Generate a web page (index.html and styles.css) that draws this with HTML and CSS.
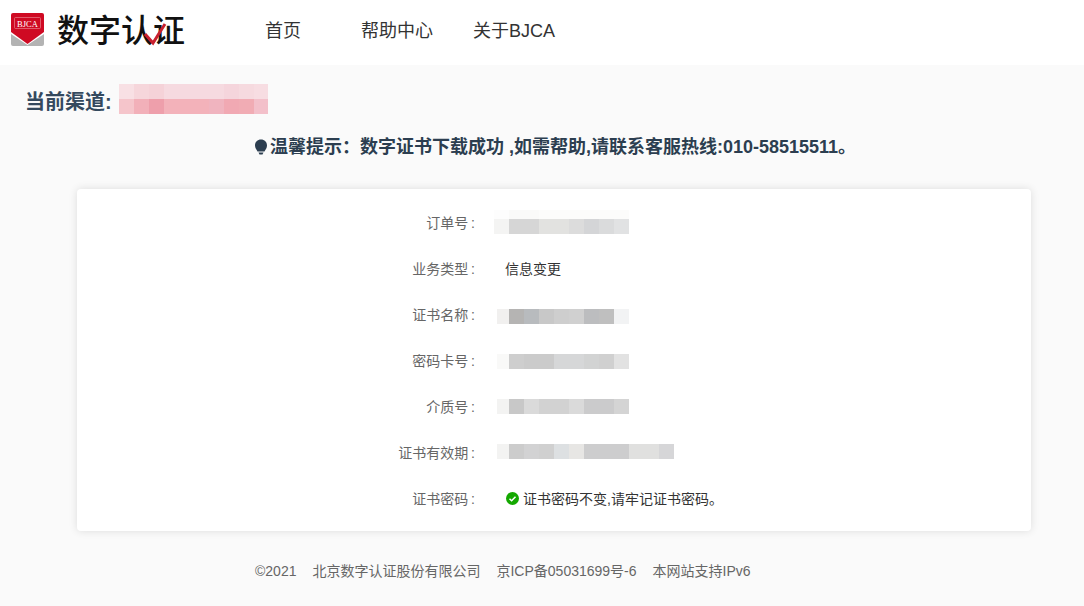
FILE: index.html
```html
<!DOCTYPE html>
<html lang="zh-CN">
<head>
<meta charset="utf-8">
<title>数字认证</title>
<link rel="stylesheet" href="styles.css">
</head>
<body>
<header class="topbar">
  <div class="brand">
    <svg class="shield" width="33" height="33" viewBox="0 0 33 33">
      <path d="M0 21L16.500 32 33 21V31a2 2 0 0 1-2 2H2a2 2 0 0 1-2-2Z" fill="#b3b3b3"/>
      <path d="M2 0H31a2 2 0 0 1 2 2V19L16.500 31 0 19V2a2 2 0 0 1 2-2Z" fill="#cf0a23"/>
      <rect x="3.500" y="4.500" width="26" height="11" rx="1" fill="none" stroke="#e8808c" stroke-width=".7"/>
      <text class="shield-text" x="16.500" y="13.500" text-anchor="middle">BJCA</text>
    </svg>
    <div class="wordmark">数字认证
      <svg class="tick" width="26" height="24" viewBox="0 0 26 24"><path d="M2 12L10 21 22 2" fill="none" stroke="#c8202f" stroke-width="3"/></svg>
    </div>
  </div>
  <nav class="nav">
    <a class="nav-item nav-home">首页</a>
    <a class="nav-item nav-help">帮助中心</a>
    <a class="nav-item">关于BJCA</a>
  </nav>
</header>
<main class="page">
  <div class="channel">
    <h2 class="channel-title">当前渠道:</h2>
    <svg class="mosaic" width="149" height="30" viewBox="0 0 149 30" shape-rendering="crispEdges">
      <rect x="0" y="0" width="15" height="15" fill="#f8e0e4"/><rect x="15" y="0" width="15" height="15" fill="#f6d6db"/><rect x="30" y="0" width="15" height="15" fill="#f5d2d8"/><rect x="45" y="0" width="60" height="15" fill="#f6dae0"/><rect x="105" y="0" width="15" height="15" fill="#f5d5dc"/><rect x="120" y="0" width="15" height="15" fill="#f6dadf"/><rect x="135" y="0" width="14" height="15" fill="#f7dde2"/>
      <rect x="0" y="15" width="15" height="15" fill="#f5c5cb"/><rect x="15" y="15" width="15" height="15" fill="#f2b0b9"/><rect x="30" y="15" width="15" height="15" fill="#ee9fab"/><rect x="45" y="15" width="45" height="15" fill="#f3b2ba"/><rect x="90" y="15" width="15" height="15" fill="#f0b4bf"/><rect x="105" y="15" width="15" height="15" fill="#f1a9b3"/><rect x="120" y="15" width="15" height="15" fill="#f1acb4"/><rect x="135" y="15" width="14" height="15" fill="#f3c0ca"/>
    </svg>
  </div>
  <p class="tip">
    <svg class="bulb" width="16" height="18" viewBox="0 0 16 18"><path d="M7 1.500C10.500 1.500 13 4 13 7.500 13 10 11.500 11.500 10.500 13.500H3.500C2.500 11.500 1 10 1 7.500 1 4 3.500 1.500 7 1.500Z" fill="#2c3e50"/><path d="M4.500 14.500H9.500L8.500 16.500H5.500Z" fill="#2c3e50"/></svg>温馨提示：数字证书下载成功 ,如需帮助,请联系客服热线:010-58515511。
  </p>
  <section class="card">
    <div class="row">
      <span class="label">订单号&#8201;:</span>
      <svg class="mosaic mosaic-order" width="135" height="24" viewBox="0 0 135 24" shape-rendering="crispEdges">
        <rect x="0" y="0" width="15" height="9" fill="#fdfdfd"/><rect x="15" y="0" width="30" height="9" fill="#fafaf9"/><rect x="45" y="0" width="90" height="9" fill="#fcfcfb"/>
        <rect x="0" y="9" width="15" height="15" fill="#f4f4f3"/><rect x="15" y="9" width="30" height="15" fill="#d6d6d6"/><rect x="45" y="9" width="30" height="15" fill="#e2e2e0"/><rect x="75" y="9" width="15" height="15" fill="#dcdcdc"/><rect x="90" y="9" width="15" height="15" fill="#d4d5d7"/><rect x="105" y="9" width="15" height="15" fill="#dadbdc"/><rect x="120" y="9" width="15" height="15" fill="#e1e2e3"/>
      </svg>
    </div>
    <div class="row">
      <span class="label">业务类型&#8201;:</span>
      <span class="value">信息变更</span>
    </div>
    <div class="row">
      <span class="label">证书名称&#8201;:</span>
      <svg class="mosaic mosaic-field mosaic-name" width="132" height="15" viewBox="0 0 132 15" shape-rendering="crispEdges">
        <rect x="0" y="0" width="12" height="15" fill="#f1f0ef"/><rect x="12" y="0" width="15" height="15" fill="#b5b4b3"/><rect x="27" y="0" width="15" height="15" fill="#b8bbbe"/><rect x="42" y="0" width="15" height="15" fill="#c8c8c8"/><rect x="57" y="0" width="15" height="15" fill="#cecece"/><rect x="72" y="0" width="15" height="15" fill="#d0d0d0"/><rect x="87" y="0" width="15" height="15" fill="#bcbdbf"/><rect x="102" y="0" width="15" height="15" fill="#bfbfbf"/><rect x="117" y="0" width="15" height="15" fill="#f2f3f4"/>
      </svg>
    </div>
    <div class="row">
      <span class="label">密码卡号&#8201;:</span>
      <svg class="mosaic mosaic-field mosaic-card" width="132" height="15" viewBox="0 0 132 15" shape-rendering="crispEdges">
        <rect x="0" y="0" width="12" height="15" fill="#f9f9f8"/><rect x="12" y="0" width="15" height="15" fill="#cecece"/><rect x="27" y="0" width="30" height="15" fill="#cbcbcb"/><rect x="57" y="0" width="30" height="15" fill="#d6d7d8"/><rect x="87" y="0" width="15" height="15" fill="#d2d3d3"/><rect x="102" y="0" width="15" height="15" fill="#d0d0d0"/><rect x="117" y="0" width="15" height="15" fill="#e2e2e2"/>
      </svg>
    </div>
    <div class="row">
      <span class="label">介质号&#8201;:</span>
      <svg class="mosaic mosaic-field mosaic-medium" width="132" height="15" viewBox="0 0 132 15" shape-rendering="crispEdges">
        <rect x="0" y="0" width="12" height="15" fill="#f3f3f2"/><rect x="12" y="0" width="15" height="15" fill="#c8c8c8"/><rect x="27" y="0" width="15" height="15" fill="#dadada"/><rect x="42" y="0" width="30" height="15" fill="#d2d2d2"/><rect x="72" y="0" width="15" height="15" fill="#dadada"/><rect x="87" y="0" width="30" height="15" fill="#cbcbcc"/><rect x="117" y="0" width="15" height="15" fill="#d4d4d4"/>
      </svg>
    </div>
    <div class="row">
      <span class="label">证书有效期&#8201;:</span>
      <svg class="mosaic mosaic-field mosaic-valid" width="177" height="15" viewBox="0 0 177 15" shape-rendering="crispEdges">
        <rect x="0" y="0" width="12" height="15" fill="#f3f3f2"/><rect x="12" y="0" width="15" height="15" fill="#cccccc"/><rect x="27" y="0" width="15" height="15" fill="#d2d2d3"/><rect x="42" y="0" width="15" height="15" fill="#d0d0d0"/><rect x="57" y="0" width="15" height="15" fill="#dde0e2"/><rect x="72" y="0" width="15" height="15" fill="#e7e6e4"/><rect x="87" y="0" width="45" height="15" fill="#cdcdce"/><rect x="132" y="0" width="30" height="15" fill="#e0e0df"/><rect x="162" y="0" width="15" height="15" fill="#d6d6d8"/>
      </svg>
    </div>
    <div class="row">
      <span class="label">证书密码&#8201;:</span>
      <span class="value value-status">
        <svg class="ok" width="13" height="13" viewBox="0 0 13 13"><circle cx="6.500" cy="6.500" r="6.500" fill="#14a800"/><path d="M3.500 6.800L5.600 8.800 9.500 4.700" fill="none" stroke="#fff" stroke-width="1.500"/></svg>证书密码不变,请牢记证书密码。
      </span>
    </div>
  </section>
  <footer class="footer">
    <span>©2021</span><span>北京数字认证股份有限公司</span><span>京ICP备05031699号-6</span><span>本网站支持IPv6</span>
  </footer>
</main>
</body>
</html>
```
FILE: styles.css
```css
* { box-sizing: border-box; }
html, body { margin: 0; padding: 0; }
body {
  font-family: "Liberation Sans", "Noto Sans CJK SC", sans-serif;
  background: #fafafa;
  color: #333;
}
.topbar {
  height: 65px;
  background: #fff;
  display: flex;
  align-items: center;
  padding-left: 11px;
}
.brand {
  display: flex;
  align-items: center;
  gap: 13px;
  width: 254px;
}
.shield { display: block; margin-top: -6px; }
.shield-text { font-family: "Liberation Serif", serif; font-size: 8.500px; fill: #fff; }
.wordmark {
  position: relative;
  font-family: "Noto Sans CJK SC", sans-serif;
  font-size: 32px;
  font-weight: 500;
  line-height: 34px;
  color: #111;
  white-space: nowrap;
  margin-top: -9px;
}
.tick { position: absolute; left: 86px; top: 11px; }
.nav { display: flex; font-size: 18px; color: #333; margin-top: -8px; }
.nav-item { display: block; }
.nav-home { width: 96px; }
.nav-help { width: 112px; }
.channel {
  display: flex;
  align-items: flex-start;
  padding: 19px 0 0 25px;
  gap: 7px;
}
.channel-title {
  margin: 3px 0 0;
  font-size: 20px;
  font-weight: 700;
  line-height: 30px;
  color: #34495e;
}
.mosaic { display: block; }
.tip {
  margin: 0;
  padding-top: 19px;
  height: 72px;
  padding-left: 254px;
  font-size: 18px;
  font-weight: 700;
  line-height: 22px;
  color: #2c3e50;
  white-space: nowrap;
}
.bulb { vertical-align: -3px; }
.card {
  margin: 0 53px 0 77px;
  height: 342px;
  background: #fff;
  border-radius: 4px;
  box-shadow: 0 0 8px rgba(0, 0, 0, .12);
  padding: 10px 0;
  display: flex;
  flex-direction: column;
}
.row {
  height: 46px;
  display: flex;
  align-items: center;
  font-size: 14px;
}
.label {
  width: 398px;
  text-align: right;
  color: #666;
  white-space: nowrap;
}
.mosaic-order { margin-left: 19px; }
.mosaic-field { margin-left: 22px; }
.mosaic-name { margin-top: 5px; }
.mosaic-card { margin-top: 3px; }
.mosaic-medium { margin-top: 1px; }
.mosaic-valid { margin-bottom: 1px; }
.value { margin-left: 30px; color: #333; white-space: nowrap; }
.value-status { display: flex; align-items: center; gap: 4px; margin-left: 31px; }
.ok { display: block; }
.footer {
  display: flex;
  gap: 16px;
  padding: 32px 0 0 255px;
  font-size: 14px;
  line-height: 16px;
  color: #666;
}
```
